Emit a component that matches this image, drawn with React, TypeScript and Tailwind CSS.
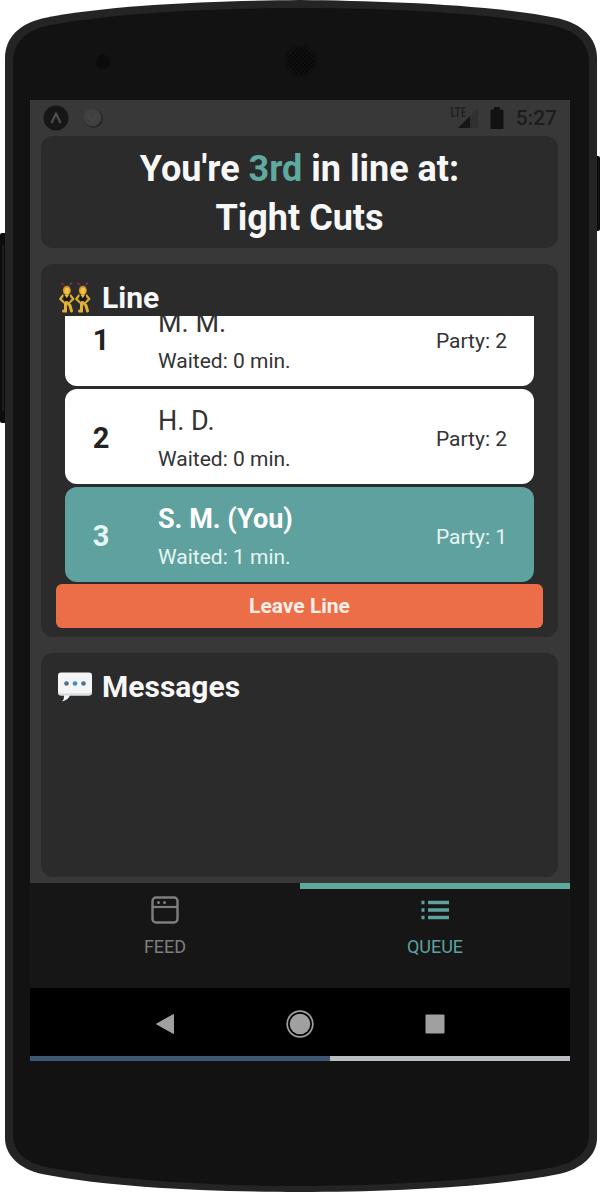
import type { ReactNode } from "react";

type Guest = {
  position: number;
  name: string;
  waited: number;
  party: number;
  isYou?: boolean;
};

const guests: Guest[] = [
  { position: 1, name: "M. M.", waited: 0, party: 2 },
  { position: 2, name: "H. D.", waited: 0, party: 2 },
  { position: 3, name: "S. M. (You)", waited: 1, party: 1, isYou: true },
];

function PhoneBody() {
  return (
    <svg
      className="absolute inset-0 h-full w-full"
      viewBox="0 0 600 1192"
      preserveAspectRatio="none"
      aria-hidden="true"
    >
      <rect x="0" y="233" width="8" height="190" rx="2" fill="#0c0c0c" />
      <rect x="2" y="245" width="2" height="166" fill="#1d1d1d" />
      <rect x="594" y="156" width="6" height="75" rx="2" fill="#0c0c0c" />
      <path
        d="M5 58C5 38 19 24 42 18.500C112 4 220 1 300 0C380 1 488 4 559 18.500C582 24 597 38 597 58V1138C597 1155 582 1169 559 1174C488 1188 380 1192 300 1192C220 1192 112 1188 42 1174C19 1169 5 1155 5 1138Z"
        fill="#242424"
      />
      <path
        d="M13 62C13 44 24 31 46 26C116 12 222 8 300 8C378 8 486 12 555 26C577 31 589 44 589 62V1135C589 1151 577 1162 555 1167C486 1181 378 1186 300 1186C222 1186 116 1181 46 1167C24 1162 13 1151 13 1135Z"
        fill="#121212"
      />
      <circle cx="103" cy="62" r="7" fill="#0b0b0b" />
      <defs>
        <pattern id="grille" width="4" height="4" patternUnits="userSpaceOnUse">
          <circle cx="1" cy="1" r="0.900" fill="#050505" />
          <circle cx="3" cy="3" r="0.900" fill="#050505" />
        </pattern>
      </defs>
      <circle cx="301" cy="61" r="16" fill="#0f0f0f" />
      <circle cx="301" cy="61" r="13" fill="url(#grille)" />
    </svg>
  );
}

function StatusBar() {
  return (
    <div className="flex h-9 items-center justify-between px-[13px] text-[#1c1c1c]">
      <div className="flex items-center gap-3.5">
        <svg width="26" height="26" viewBox="0 0 26 26" aria-hidden="true">
          <circle cx="13" cy="13" r="12.500" fill="#161616" />
          <path d="M8.500 18L13 8.500L17.500 18" fill="none" stroke="#4c4c4c" strokeWidth="2.400" strokeLinejoin="round" />
        </svg>
        <svg width="20" height="20" viewBox="0 0 20 20" aria-hidden="true">
          <circle cx="10.500" cy="10.500" r="9.500" fill="#282828" />
          <circle cx="9.500" cy="9.500" r="8.800" fill="#404040" />
          <path d="M4 6L9 13L14 6" fill="none" stroke="#464646" strokeWidth="2" />
        </svg>
      </div>
      <div className="flex items-center gap-3">
        <svg width="28" height="24" viewBox="0 0 28 24" aria-hidden="true">
          <path d="M28 2V22H8Z" fill="#303030" />
          <path d="M20 10V22H8Z" fill="#161616" />
          <path d="M2 1V10.300H5.500M5 1.800H10.500M7.700 1.800V11M15.500 1.800H12.300V10.300H15.500M12.300 6H15" fill="none" stroke="#202020" strokeWidth="1.600" />
        </svg>
        <svg width="14" height="22" viewBox="0 0 14 22" aria-hidden="true">
          <path d="M4 2.500V0H10V2.500H12Q13.500 2.500 13.500 4V22H0.500V4Q0.500 2.500 2 2.500Z" fill="#121212" />
        </svg>
        <span className="text-[21px] leading-6 font-medium">5:27</span>
      </div>
    </div>
  );
}

function Dancer({ x }: { x: number }) {
  return (
    <g transform={`translate(${x} 0)`}>
      <path d="M5.500 4L3.500 1M10 4L12 1" stroke="#6b2a4c" strokeWidth="1.300" />
      <circle cx="3.200" cy="1.500" r="1.100" fill="#84305a" />
      <circle cx="12.300" cy="1.500" r="1.100" fill="#84305a" />
      <ellipse cx="7.800" cy="8.500" rx="4" ry="4.700" fill="#cf9420" />
      <ellipse cx="8" cy="9" rx="2.700" ry="3.400" fill="#f0c040" />
      <path d="M4 13.500L1.200 17L5 20.500M11.500 13.500L14.300 17L10.500 20.500" fill="none" stroke="#dcae35" strokeWidth="2.200" strokeLinecap="round" strokeLinejoin="round" />
      <path d="M4.500 13H11L10.300 20H5.200Z" fill="#1a1a24" />
      <path d="M5.500 13L7.800 16L10 13Z" fill="#f0bd35" />
      <path d="M6.500 20.500V29H4.500M8 20.500L11 23.500L12.500 29" fill="none" stroke="#e0af33" strokeWidth="3" strokeLinecap="round" />
    </g>
  );
}

function DancersIcon() {
  return (
    <svg width="34" height="32" viewBox="0 0 34 32" role="img" aria-label="Dancers">
      <Dancer x={1} />
      <Dancer x={17} />
    </svg>
  );
}

function SpeechIcon() {
  return (
    <svg width="34" height="32" viewBox="0 0 34 32" role="img" aria-label="Speech bubble">
      <path d="M3 1.500H31Q34 1.500 34 4.500V21.500Q34 24.500 31 24.500H12Q10 29 4 30.500Q6.500 28 6 24.500H3Q0 24.500 0 21.500V4.500Q0 1.500 3 1.500Z" fill="#f3f5f7" />
      <path d="M0 20.500Q0 24.500 3 24.500H31Q34 24.500 34 20.500Q33 22.500 30 22.500H4Q1 22.500 0 20.500Z" fill="#d5dade" />
      <circle cx="8.500" cy="12.500" r="2.300" fill="#526f8a" />
      <circle cx="17" cy="12.500" r="2.300" fill="#3f8cce" />
      <circle cx="25.500" cy="12.500" r="2.300" fill="#526f8a" />
    </svg>
  );
}

function SectionTitle({ icon, children }: { icon: ReactNode; children: ReactNode }) {
  return (
    <h2 className="flex items-center gap-2.5 px-[17px] text-[30px] leading-9 font-bold text-[#f7f7f7]">
      {icon}
      {children}
    </h2>
  );
}

function GuestRow({ guest }: { guest: Guest }) {
  return (
    <li
      className={
        guest.isYou
          ? "flex shrink-0 items-center rounded-xl bg-[#5fa19e] pt-1 pr-[27px] text-[#e6f5f4]"
          : "flex shrink-0 items-center rounded-xl bg-white pt-1 pr-[27px] text-[#333]"
      }
    >
      <span
        className={
          guest.isYou
            ? "w-[72px] text-center text-[29px] font-bold"
            : "w-[72px] text-center text-[29px] font-bold text-[#222]"
        }
      >
        {guest.position}
      </span>
      <div className="flex-1 pt-2.5 pb-[5px] pl-[21px]">
        <p className={guest.isYou ? "text-[27px] leading-9 font-bold text-white" : "text-[27px] leading-9"}>
          {guest.name}
        </p>
        <p className="text-[21px] leading-10">Waited: {guest.waited} min.</p>
      </div>
      <span className="text-[21px] leading-8">Party: {guest.party}</span>
    </li>
  );
}

function TabBar() {
  return (
    <nav className="grid grid-cols-2 bg-[#161616] text-[18px] leading-6">
      <a
        href="#feed"
        className="flex h-[105px] flex-col items-center gap-[11px] border-t-[6px] border-transparent pt-[7px] text-[#7e7e7e]"
      >
        <svg width="28" height="28" viewBox="0 0 28 28" fill="none" stroke="currentColor" aria-hidden="true">
          <rect x="1.500" y="1.500" width="25" height="25" rx="3.500" strokeWidth="2.400" />
          <path d="M1.500 11H26.500" strokeWidth="2.200" />
          <circle cx="7.500" cy="6.500" r="1.500" fill="currentColor" stroke="none" />
          <circle cx="13.500" cy="6.500" r="1.500" fill="currentColor" stroke="none" />
        </svg>
        FEED
      </a>
      <a
        href="#queue"
        aria-current="page"
        className="flex h-[105px] flex-col items-center gap-[11px] border-t-[6px] border-[#5fa99f] pt-[7px] text-[#5fa19e]"
      >
        <svg width="28" height="28" viewBox="0 0 28 28" fill="none" stroke="currentColor" aria-hidden="true">
          <path d="M7 6.500H28M7 14H28M7 21.500H28" strokeWidth="3.500" />
          <path d="M0.500 6.500H3.500M0.500 14H3.500M0.500 21.500H3.500" strokeWidth="3.500" />
        </svg>
        QUEUE
      </a>
    </nav>
  );
}

function SystemButtons() {
  return (
    <div className="bg-black pt-1">
      <div className="mx-auto grid h-16 w-3/4 grid-cols-3 items-center justify-items-center">
        <button type="button" aria-label="Back">
          <svg width="20" height="22" viewBox="0 0 20 22" aria-hidden="true">
            <path d="M18.500 1.500V20.500L1.500 11Z" fill="#a0a0a0" stroke="#a0a0a0" strokeLinejoin="round" />
          </svg>
        </button>
        <button type="button" aria-label="Home">
          <svg width="28" height="28" viewBox="0 0 28 28" aria-hidden="true">
            <circle cx="14" cy="14" r="12.800" fill="none" stroke="#a0a0a0" strokeWidth="1.700" />
            <circle cx="14" cy="14" r="10.300" fill="#a0a0a0" />
          </svg>
        </button>
        <button type="button" aria-label="Recent apps">
          <svg width="20" height="20" viewBox="0 0 20 20" aria-hidden="true">
            <rect x="0.500" y="0.500" width="19" height="19" rx="1" fill="#a0a0a0" />
          </svg>
        </button>
      </div>
    </div>
  );
}

export default function App() {
  return (
    <main className="bg-white pr-3 pb-1.5 font-['Roboto',sans-serif]">
      <div className="relative">
        <PhoneBody />
        <div className="relative px-[30px] pt-[100px] pb-[131px]">
          <div className="bg-[#383838]">
            <StatusBar />
            <div className="flex flex-col gap-4 pr-3 pb-1.5 pl-[11px]">
              <header className="rounded-xl bg-[#2b2b2b] pt-[9px] pb-[5px] text-center">
                <h1 className="text-[36px] leading-[49px] font-bold text-[#f7f7f7]">
                  You're <span className="text-[#5fa99f]">3rd</span> in line at:
                  <br />
                  Tight Cuts
                </h1>
              </header>

              <section className="rounded-xl bg-[#2b2b2b] pt-4 pb-[9px]">
                <SectionTitle icon={<DancersIcon />}>Line</SectionTitle>
                <ol className="mx-6 flex max-h-[266px] flex-col justify-end gap-[3px] overflow-hidden">
                  {guests.map((guest) => (
                    <GuestRow key={guest.position} guest={guest} />
                  ))}
                </ol>
                <div className="px-[15px] pt-0.5">
                  <button
                    type="button"
                    className="h-11 w-full rounded-md bg-[#ec6e48] text-[21px] leading-6 font-bold text-[#fdeee8]"
                  >
                    Leave Line
                  </button>
                </div>
              </section>

              <section className="min-h-[224px] rounded-xl bg-[#2b2b2b] pt-4">
                <SectionTitle icon={<SpeechIcon />}>Messages</SectionTitle>
              </section>
            </div>
            <TabBar />
            <SystemButtons />
            <div className="flex h-[5px] bg-[#b9bcc1]">
              <div className="w-5/9 bg-[#3f5670]" />
            </div>
          </div>
        </div>
      </div>
    </main>
  );
}
